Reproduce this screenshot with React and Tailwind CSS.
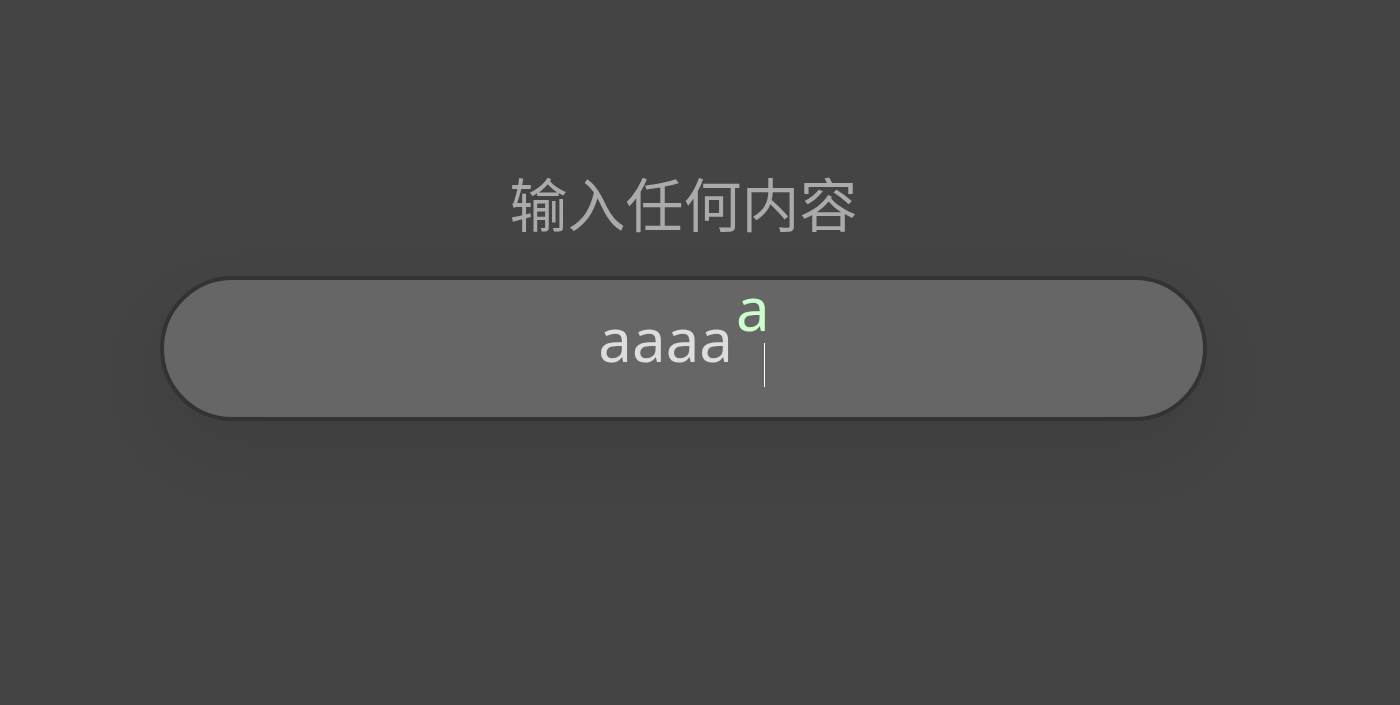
import React from "react";

export default function App() {
  return (
    <div
      className="min-h-screen w-full bg-[#444444] flex flex-col"
      style={{ fontFamily: '"Noto Sans", "Noto Sans CJK SC", sans-serif' }}
    >
      <div className="ml-[160px] w-[1047px] pt-[163px] flex flex-col items-center">
        <h1 className="text-[58px] leading-[84px] text-[#aaaaaa] font-normal">
          输入任何内容
        </h1>
        <div className="mt-[29px] h-[145px] w-full rounded-full border-4 border-[#333333] bg-[#666666] shadow-[0_30px_70px_rgba(0,0,0,0.08)] flex items-center justify-center">
          <div className="flex items-end text-[60px] leading-none pb-[20px] pr-[4px]">
            <span className="text-[#dddddd]">aaaa</span>
            <span className="text-[#ccffcc] -translate-y-[31px] ml-[3px]">a</span>
            <span className="w-[1px] h-[44px] bg-white -ml-[6px] mb-[-18px]" />
          </div>
        </div>
      </div>
    </div>
  );
}
